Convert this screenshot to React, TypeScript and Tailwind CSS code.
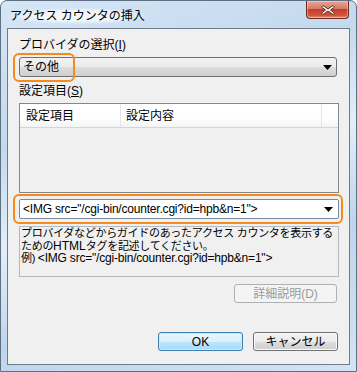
import React from 'react';

const jp = "font-['Liberation_Sans','Noto_Sans_CJK_JP',sans-serif]";

function Arrow() {
  return (
    <svg width="9" height="5" viewBox="0 0 9 5" className="shrink-0">
      <path d="M0 0h9L4.5 5z" fill="#000" />
    </svg>
  );
}

function CloseButton() {
  return (
    <div className="w-[43px] h-[18px] rounded-b-[4px] border border-t-0 border-[#6b2a20] bg-[linear-gradient(#e8a595_0%,#d77966_45%,#c2402b_50%,#d2553d_85%,#e89a7f_100%)] flex items-center justify-center shadow-[inset_0_0_0_1px_rgba(255,255,255,0.35)]">
      <svg width="16" height="12" viewBox="0 0 16 12">
        <path
          d="M3 1.5 8 5 13 1.5 14.5 3 10.5 6 14.5 9 13 10.5 8 7 3 10.5 1.5 9 5.5 6 1.5 3z"
          fill="#fff"
          stroke="#5a2a22"
          strokeWidth="1"
          strokeLinejoin="round"
        />
      </svg>
    </div>
  );
}

function VistaButton({ label, primary, disabled, className = '' }: { label: string; primary?: boolean; disabled?: boolean; className?: string }) {
  const tone = disabled
    ? 'border-[#adb2b5] bg-[#f4f4f4] text-[#9a9a9a]'
    : primary
      ? 'border-[#3c7fb1] bg-[linear-gradient(#eaf6fd_0%,#d9f0fc_50%,#bee6fd_50%,#a7d9f5_100%)] text-black shadow-[inset_0_0_0_1px_#c8eafc]'
      : 'border-[#707070] bg-[linear-gradient(#f2f2f2_0%,#ebebeb_50%,#dddddd_50%,#cfcfcf_100%)] text-black shadow-[inset_0_0_0_1px_#fbfbfb]';
  return (
    <div className={`h-[19px] rounded-[3px] border flex items-center justify-center text-[12px] leading-none ${tone} ${className}`}>
      {label}
    </div>
  );
}

export default function App() {
  return (
    <div className={`w-[357px] h-[372px] ${jp} relative overflow-hidden rounded-t-[7px] border border-[#5f6f82] bg-[linear-gradient(160deg,#d5e6f6_0%,#c4d9ee_30%,#e2eef9_50%,#bfd5ec_70%,#d2e4f5_100%)] flex flex-col px-[6px] pb-[6px]`}>
      {/* Title bar */}
      <div className="h-[27px] flex items-start justify-between shrink-0">
        <div className="mt-[7px] ml-[2px] px-[1px] text-[12px] leading-[16px] text-black rounded-full bg-[radial-gradient(ellipse_at_center,rgba(255,255,255,0.75)_40%,rgba(255,255,255,0)_75%)]">
          アクセス カウンタの挿入
        </div>
        <div className="mr-[1px]">
          <CloseButton />
        </div>
      </div>

      {/* Client area */}
      <div className="flex-1 border border-[#6d7b8a] bg-[#f0f0f0] flex flex-col pl-[11px] pr-[10px] text-black">
        <div className="mt-[9px] h-[14px] text-[12px] leading-[14px]">プロバイダの選択(<span className="underline">I</span>)</div>

        <div className="relative mt-[5px]">
          <div className="h-[20px] w-[318px] rounded-[3px] border border-[#707070] bg-[linear-gradient(#f2f2f2_0%,#ebebeb_50%,#dddddd_50%,#cfcfcf_100%)] flex items-center justify-between pl-[3px] pr-[4px] text-[12px]">
            <span>その他</span>
            <Arrow />
          </div>
          <div className="absolute left-[-6px] top-[-4px] w-[62px] h-[29px] rounded-[6px] border-2 border-[#f58a1f]" />
        </div>

        <div className="mt-[7px] h-[14px] text-[12px] leading-[14px]">設定項目(<span className="underline">S</span>)</div>

        {/* List view */}
        <div className="mt-[5px] w-[320px] h-[90px] border border-[#828790] bg-[#f0f0f0] flex flex-col">
          <div className="h-[24px] flex bg-[linear-gradient(#ffffff_0%,#ffffff_60%,#f3f4f6_100%)] border-b border-[#d5d5d5] text-[12px]">
            <div className="w-[101px] flex items-center pl-[6px] border-r border-[#e3e5e8]">設定項目</div>
            <div className="w-[201px] flex items-center pl-[5px] border-r border-[#e3e5e8]">設定内容</div>
            <div className="flex-1" />
          </div>
        </div>

        <div className="relative mt-[6px]">
          <div className="h-[20px] w-[320px] rounded-[2px] border border-[#7a8a9c] bg-white flex items-center justify-between pl-[3px] pr-[5px] text-[12px] tracking-[-0.2px]">
            <span>&lt;IMG src=&quot;/cgi-bin/counter.cgi?id=hpb&amp;n=1&quot;&gt;</span>
            <Arrow />
          </div>
          <div className="absolute left-[-6px] top-[-5px] w-[330px] h-[30px] rounded-[6px] border-2 border-[#f58a1f]" />
        </div>

        {/* Description */}
        <div className="mt-[7px] w-[320px] h-[51px] border border-[#b5b8bd] bg-[#f0f0f0] px-[1px] pt-0 text-[11px] leading-[12.5px] tracking-[-0.3px]">
          <div>プロバイダなどからガイドのあったアクセス カウンタを表示する</div>
          <div>ための<span className="text-[12px] tracking-normal">HTML</span>タグを記述してください。</div>
          <div>例) <span className="text-[12px] tracking-[-0.2px]">&lt;IMG src=&quot;/cgi-bin/counter.cgi?id=hpb&amp;n=1&quot;&gt;</span></div>
        </div>

        <div className="mt-[7px] flex justify-end pr-[2px]">
          <VistaButton label="詳細説明(D)" disabled className="w-[103px] h-[19px]" />
        </div>

        <div className="mt-[29px] flex justify-end gap-[10px] pr-[1px]">
          <VistaButton label="OK" primary className="w-[85px]" />
          <VistaButton label="キャンセル" className="w-[85px]" />
        </div>
      </div>
    </div>
  );
}
